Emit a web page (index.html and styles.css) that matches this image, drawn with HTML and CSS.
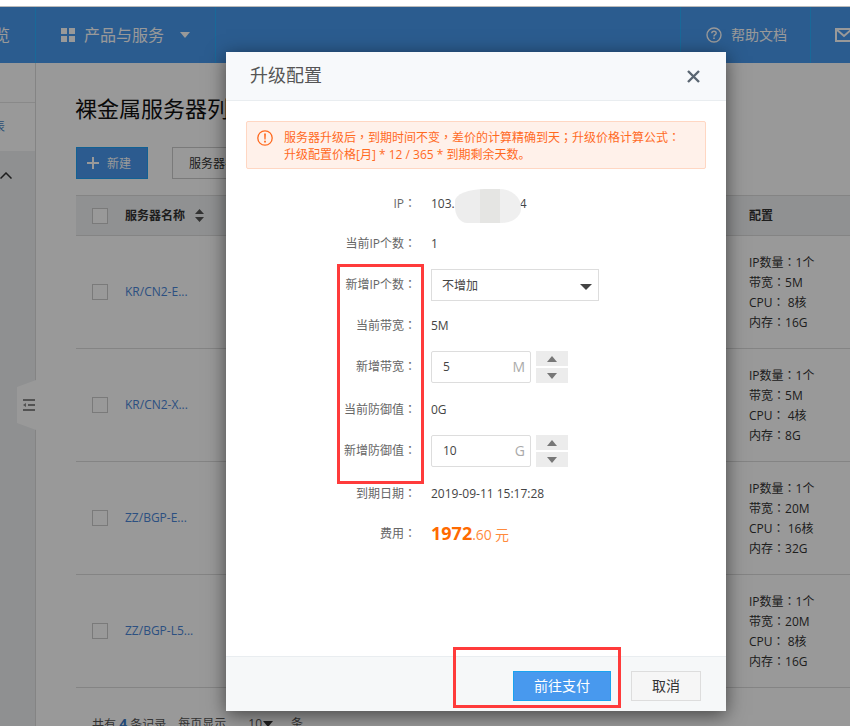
FILE: index.html
```html
<!DOCTYPE html>
<html lang="zh-CN">
<head>
<meta charset="utf-8">
<title>升级配置</title>
<link rel="stylesheet" href="styles.css">
</head>
<body>
<div class="strip"></div>
<header class="nav">
  <div class="nav-item first"><span>总览</span></div>
  <div class="nav-item products">
    <svg class="grid-ic" width="14" height="14" viewBox="0 0 14 14"><path fill="#fff" d="M0 0h6v6H0zM8 0h6v6H8zM0 8h6v6H0zM8 8h6v6H8z"/></svg>
    <span>产品与服务</span>
    <svg class="caret" width="10" height="6" viewBox="0 0 10 6"><path fill="#fff" d="M0 0h10L5 6z"/></svg>
  </div>
  <div class="nav-space"></div>
  <div class="nav-item help">
    <svg width="16" height="16" viewBox="0 0 16 16"><circle cx="8" cy="8" r="7" fill="none" stroke="#fff" stroke-width="1.4"/><path fill="none" stroke="#fff" stroke-width="1.4" d="M5.8 6.3C5.8 5 6.8 4.3 8 4.3s2.2.8 2.2 1.900c0 1.500-2.200 1.500-2.200 3.200"/><path fill="#fff" d="M7.200 10.600h1.600v1.400H7.200z"/></svg>
    <span>帮助文档</span>
  </div>
  <div class="nav-item mail">
    <svg width="18" height="14" viewBox="0 0 18 14"><path fill="none" stroke="#fff" stroke-width="2" d="M1 1h16v12H1zM1 1l8 7 8-7"/></svg>
  </div>
</header>
<div class="main">
  <aside class="side">
    <div class="side-top"></div>
    <div class="side-tab"><span>列表</span></div>
    <div class="side-group">
      <svg width="12" height="7" viewBox="0 0 12 7"><path fill="none" stroke="#333" stroke-width="1.500" d="M.5 6.500L6 1l5.500 5.500"/></svg>
    </div>
    <div class="collapse">
      <svg width="12" height="12" viewBox="0 0 12 12"><path fill="#8a8a8a" d="M0 0h12v2H0zM5 5h7v2H5zM0 10h12v2H0zM3 4v4L0 6z"/></svg>
    </div>
  </aside>
  <section class="content">
    <h1 class="title">裸金属服务器列表</h1>
    <div class="tools">
      <button class="btn-new"><svg width="12" height="12" viewBox="0 0 12 12"><path fill="#fff" d="M5 0h2v5h5v2H7v5H5V7H0V5h5z"/></svg><span>新建</span></button>
      <button class="btn-filter">服务器名称</button>
    </div>
    <div class="table">
      <div class="row head">
        <div class="cell-check"><i class="box"></i></div>
        <div class="cell-name">服务器名称
          <svg class="sort" width="9" height="13" viewBox="0 0 9 13"><path fill="#555" d="M4.500 0L9 5H0zM0 8h9l-4.500 5z"/></svg>
        </div>
        <div class="cell-spec">配置</div>
      </div>
      <div class="row">
        <div class="cell-check"><i class="box"></i></div>
        <div class="cell-name"><a class="link">KR/CN2-E...</a></div>
        <div class="cell-spec"><p>IP数量<span class="c" lang="zh-TW">：</span>1个</p><p>带宽<span class="c" lang="zh-TW">：</span>5M</p><p>CPU<span class="c" lang="zh-TW">：</span> 8核</p><p>内存<span class="c" lang="zh-TW">：</span>16G</p></div>
      </div>
      <div class="row">
        <div class="cell-check"><i class="box"></i></div>
        <div class="cell-name"><a class="link">KR/CN2-X...</a></div>
        <div class="cell-spec"><p>IP数量<span class="c" lang="zh-TW">：</span>1个</p><p>带宽<span class="c" lang="zh-TW">：</span>5M</p><p>CPU<span class="c" lang="zh-TW">：</span> 4核</p><p>内存<span class="c" lang="zh-TW">：</span>8G</p></div>
      </div>
      <div class="row">
        <div class="cell-check"><i class="box"></i></div>
        <div class="cell-name"><a class="link">ZZ/BGP-E...</a></div>
        <div class="cell-spec"><p>IP数量<span class="c" lang="zh-TW">：</span>1个</p><p>带宽<span class="c" lang="zh-TW">：</span>20M</p><p>CPU<span class="c" lang="zh-TW">：</span> 16核</p><p>内存<span class="c" lang="zh-TW">：</span>32G</p></div>
      </div>
      <div class="row">
        <div class="cell-check"><i class="box"></i></div>
        <div class="cell-name"><a class="link">ZZ/BGP-L5...</a></div>
        <div class="cell-spec"><p>IP数量<span class="c" lang="zh-TW">：</span>1个</p><p>带宽<span class="c" lang="zh-TW">：</span>20M</p><p>CPU<span class="c" lang="zh-TW">：</span> 8核</p><p>内存<span class="c" lang="zh-TW">：</span>16G</p></div>
      </div>
    </div>
    <div class="pager">
      <span class="p-total">共有 <b>4</b> 条记录</span>
      <span>每页显示</span>
      <span class="per">10<svg width="10" height="6" viewBox="0 0 10 6"><path fill="#333" d="M0 0h10L5 6z"/></svg></span>
      <span>条</span>
    </div>
  </section>
</div>

<div class="scrim"></div>

<div class="modal">
  <div class="m-head">
    <h2>升级配置</h2>
    <svg width="13" height="13" viewBox="0 0 13 13"><path fill="none" stroke="#5a6672" stroke-width="2.400" d="M1 1l11 11M12 1L1 12"/></svg>
  </div>
  <div class="m-body">
    <div class="warn">
      <svg width="16" height="16" viewBox="0 0 16 16"><circle cx="8" cy="8" r="7.200" fill="none" stroke="#ff6a1f" stroke-width="1.300"/><path fill="#ff6a1f" d="M7.100 3.500h1.800l-.3 6H7.400zM7.100 10.700h1.800v1.800H7.100z"/></svg>
      <p>服务器升级后<span class="c" lang="zh-TW">，</span>到期时间不变<span class="c" lang="zh-TW">，</span>差价的计算精确到天<span class="c" lang="zh-TW">；</span>升级价格计算公式<span class="c" lang="zh-TW">：</span><br>升级配置价格[月] * 12 / 365 * 到期剩余天数。</p>
    </div>
    <div class="form">
      <div class="f-row"><label>IP<span class="c" lang="zh-TW">：</span></label><div class="val">103.<span class="smudge"></span>4</div></div>
      <div class="f-row"><label>当前IP个数<span class="c" lang="zh-TW">：</span></label><div class="val">1</div></div>
      <div class="f-row ctl"><label>新增IP个数<span class="c" lang="zh-TW">：</span></label>
        <div class="select"><span>不增加</span><svg width="12" height="6" viewBox="0 0 12 6"><path fill="#444" d="M0 0h12L6 6z"/></svg></div>
      </div>
      <div class="f-row"><label>当前带宽<span class="c" lang="zh-TW">：</span></label><div class="val">5M</div></div>
      <div class="f-row ctl"><label>新增带宽<span class="c" lang="zh-TW">：</span></label>
        <div class="num"><span>5</span><em>M</em></div>
        <div class="stepper"><i><svg width="10" height="6" viewBox="0 0 10 6"><path fill="#777" d="M5 0l5 6H0z"/></svg></i><i><svg width="10" height="6" viewBox="0 0 10 6"><path fill="#777" d="M0 0h10L5 6z"/></svg></i></div>
      </div>
      <div class="f-row tall"><label>当前防御值<span class="c" lang="zh-TW">：</span></label><div class="val">0G</div></div>
      <div class="f-row ctl"><label>新增防御值<span class="c" lang="zh-TW">：</span></label>
        <div class="num"><span>10</span><em>G</em></div>
        <div class="stepper"><i><svg width="10" height="6" viewBox="0 0 10 6"><path fill="#777" d="M5 0l5 6H0z"/></svg></i><i><svg width="10" height="6" viewBox="0 0 10 6"><path fill="#777" d="M0 0h10L5 6z"/></svg></i></div>
      </div>
      <div class="f-row late"><label>到期日期<span class="c" lang="zh-TW">：</span></label><div class="val">2019-09-11 15:17:28</div></div>
      <div class="f-row"><label>费用<span class="c" lang="zh-TW">：</span></label><div class="val fee"><strong>1972</strong><small>.60</small> <span>元</span></div></div>
    </div>
  </div>
  <div class="m-foot">
    <button class="pay">前往支付</button>
    <button class="cancel">取消</button>
  </div>
  <div class="mark mark-form"></div>
  <div class="mark mark-pay"></div>
</div>
</body>
</html>
```
FILE: styles.css
```css
* { box-sizing: border-box; }
html, body { margin: 0; height: 726px; overflow: hidden; }
body {
  position: relative;
  background: #fff;
  color: #444;
  font: 12px/1.4 "Open Sans", "Noto Sans CJK SC", sans-serif;
}
p, h1, h2 { margin: 0; font-weight: 400; }
button { font: inherit; padding: 0; }
.c { font-family: "Noto Sans CJK TC", sans-serif; line-height: 1; }

.strip { height: 7px; background: #fff; border-bottom: 1px solid #bbb; }

.nav { display: flex; height: 56px; background: #4899ee; color: #fff; }
.nav-item { display: flex; align-items: center; border-right: 1px solid #2bb0ff; }
.nav-space { flex: 1; }
.first { width: 36px; justify-content: flex-end; overflow: hidden; font-size: 16px; padding-right: 25px; }
.first span { white-space: nowrap; }
.products { width: 180px; padding-left: 25px; font-size: 16px; }
.products span { margin-left: 9px; }
.caret { margin-left: 16px; }
.help { width: 131px; padding-left: 25px; font-size: 14px; border-left: 1px solid #2bb0ff; }
.help span { margin-left: 9px; }
.mail { width: 39px; padding-left: 24px; border-right: 0; }
.mail svg { flex: none; }

.main { display: flex; height: 663px; }
.side { position: relative; flex: none; width: 36px; background: #eef0f2; border-right: 1px solid #ddd; }
.side-top { height: 40px; background: #fff; border-bottom: 1px solid #e5e5e5; }
.side-tab { display: flex; align-items: center; justify-content: flex-end; height: 48px; background: #fff; overflow: hidden; color: #4a86c5; padding-right: 30px; }
.side-tab span { white-space: nowrap; }
.side-group { padding: 21px 0 0 0; line-height: 0; }
.collapse {
  position: absolute; left: 17px; top: 317px; width: 19px; height: 50px;
  background: #fff;
  clip-path: polygon(0 14%, 100% 0, 100% 100%, 0 86%);
  display: flex; align-items: center; padding-left: 6px;
}

.content { flex: 1; min-width: 0; padding: 30px 0 0 40px; }
.title { font-size: 22px; line-height: 30px; color: #111; white-space: nowrap; margin-left: -1px; }
.tools { display: flex; gap: 24px; margin-top: 24px; }
.btn-new {
  display: flex; align-items: center; gap: 8px; padding: 2px 0 0 10px;
  width: 72px; height: 32px; background: #4a98ee; border: 1px solid #1fa2f5; color: #fff; font-size: 12px;
}
.btn-new svg { margin-top: -2px; }
.btn-filter { width: 120px; height: 32px; background: #fff; border: 1px solid #ccc; color: #333; text-align: left; padding: 2px 0 0 16px; font-size: 12px; }

.table { margin-top: 16px; }
.row { display: flex; align-items: center; height: 113px; border-bottom: 1px solid #ddd; }
.head { height: 41px; background: #f0f2f4; border-top: 1px solid #ddd; font-weight: 700; color: #333; }
.cell-check { flex: none; width: 49px; padding-left: 16px; line-height: 0; }
.box { display: block; width: 16px; height: 16px; border: 1px solid #ccc; background: #fff; }
.cell-name { flex: none; width: 624px; }
.head .cell-name, .head .cell-spec { padding-top: 2px; }
.sort { margin-left: 7px; vertical-align: -2px; }
.link { color: #4a86d8; }
.cell-spec { flex: 1; color: #333; padding-top: 2px; }
.cell-spec p { line-height: 20px; }
.pager { display: flex; align-items: center; margin: 26px 0 0 16px; color: #555; font-size: 12px; }
.p-total { margin-right: 12px; }
.pager b { color: #3a7bc8; font-size: 14px; }
.per { display: flex; align-items: center; gap: 1px; margin: 0 18px 0 22px; }

.scrim { position: absolute; left: 0; right: 0; top: 7px; bottom: 0; background: rgba(0, 0, 0, .4); }

.modal {
  position: absolute; left: 226px; top: 52px; width: 500px; height: 659px;
  display: flex; flex-direction: column;
  background: #fff;
  box-shadow: 0 4px 18px rgba(0, 0, 0, .55);
}
.m-head {
  display: flex; align-items: center; justify-content: space-between;
  height: 49px; padding: 0 26px 0 24px;
  background: #f7f9fb; border-bottom: 1px solid #e9edf0;
}
.m-head h2 { font-size: 18px; color: #555; }
.m-body { flex: 1; padding: 20px 20px 0; }
.warn {
  display: flex; gap: 11px; height: 48px; padding: 7px 10px;
  background: #fff1ea; border: 1px solid #ffd7c3; border-radius: 2px;
  color: #ff6a1f; line-height: 17px;
}
.warn svg { flex: none; margin-top: 1px; }

.form { display: flex; flex-direction: column; gap: 10px; margin-top: 20px; }
.f-row { display: flex; align-items: center; height: 30px; color: #555; }
.f-row.ctl { height: 32px; }
.f-row.tall { height: 32px; padding-top: 2px; }
.f-row.late { margin-top: 2px; }
.f-row label { flex: none; width: 170px; text-align: right; color: #666; white-space: nowrap; }
.val { margin-left: 15px; color: #444; white-space: nowrap; }
.smudge { display: inline-block; width: 65px; height: 1px; position: relative; }
.smudge::after {
  content: ""; position: absolute; left: 0; top: -18px; width: 66px; height: 34px;
  border-radius: 30px 22px 20px 12px / 12px 18px 14px 16px;
  background: linear-gradient(90deg, #ededed 0 38%, #e5e5e3 38% 68%, #efefef 68%);
}
.select {
  display: flex; align-items: center; justify-content: space-between;
  margin-left: 15px; width: 168px; height: 32px; padding: 3px 6px 0 10px;
  border: 1px solid #ddd; color: #444;
}
.num {
  display: flex; align-items: center; justify-content: space-between;
  margin-left: 15px; width: 100px; height: 32px; padding: 0 5px 0 11px;
  border: 1px solid #ddd; border-radius: 2px; color: #444;
}
.num em { font-style: normal; font-size: 14px; color: #aaa; }
.stepper { display: flex; flex-direction: column; justify-content: space-between; margin-left: 5px; width: 32px; height: 32px; }
.stepper i { display: flex; align-items: center; justify-content: center; height: 15px; background: #ececec; }
.fee { color: #ff6a00; }
.fee strong { font-size: 18px; }
.fee small { font-size: 14px; color: #ff8a3c; }
.fee span { font-size: 14px; color: #ff8a3c; }

.m-foot {
  display: flex; justify-content: flex-end; gap: 20px;
  height: 55px; padding: 14px 25px 0 0;
  background: #f6f8f9; border-top: 1px solid #e9edf0;
}
.pay { width: 98px; height: 30px; background: #4899ee; border: 1px solid #1aa3f0; color: #fff; font-size: 14px; }
.cancel { width: 70px; height: 30px; background: #f6f6f6; border: 1px solid #ddd; color: #333; font-size: 14px; }

.mark { position: absolute; border: 3px solid #ff3b3b; }
.mark-form { left: 111px; top: 212px; width: 87px; height: 220px; }
.mark-pay { left: 227px; top: 595px; width: 168px; height: 61px; }
```
